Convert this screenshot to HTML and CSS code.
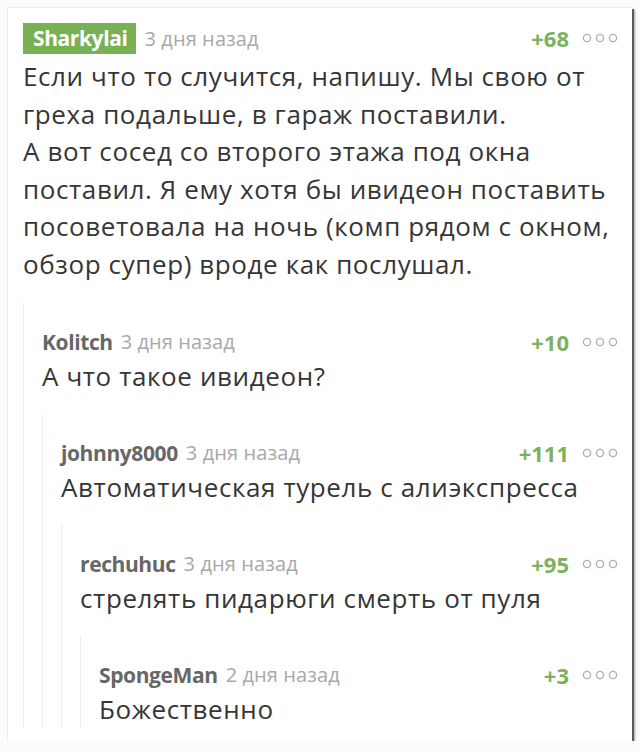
FILE: index.html
```html
<!DOCTYPE html>
<html lang="ru">
<head>
<meta charset="utf-8">
<link rel="stylesheet" href="styles.css">
</head>
<body>
<div class="card">
  <div class="comment first">
    <div class="head">
      <span class="user badge">Sharkylai</span>
      <span class="time">3 дня назад</span>
      <span class="score">+68</span>
      <svg class="dots" width="38" height="10" viewBox="0 0 38 10"><circle cx="5" cy="5" r="3.6"/><circle cx="18" cy="5" r="3.6"/><circle cx="31" cy="5" r="3.6"/></svg>
    </div>
    <div class="body">Если что то случится, напишу. Мы свою от греха подальше, в гараж поставили.<br>А вот сосед со второго этажа под окна поставил. Я ему хотя бы ивидеон поставить посоветовала на ночь (комп рядом с окном, обзор супер) вроде как послушал.</div>
    <div class="children">
      <div class="comment">
        <div class="head">
          <span class="user">Kolitch</span>
          <span class="time">3 дня назад</span>
          <span class="score">+10</span>
          <svg class="dots" width="38" height="10" viewBox="0 0 38 10"><circle cx="5" cy="5" r="3.6"/><circle cx="18" cy="5" r="3.6"/><circle cx="31" cy="5" r="3.6"/></svg>
        </div>
        <div class="body">А что такое ивидеон?</div>
        <div class="children">
          <div class="comment">
            <div class="head">
              <span class="user">johnny8000</span>
              <span class="time">3 дня назад</span>
              <span class="score">+111</span>
              <svg class="dots" width="38" height="10" viewBox="0 0 38 10"><circle cx="5" cy="5" r="3.6"/><circle cx="18" cy="5" r="3.6"/><circle cx="31" cy="5" r="3.6"/></svg>
            </div>
            <div class="body">Автоматическая турель с алиэкспресса</div>
            <div class="children">
              <div class="comment">
                <div class="head">
                  <span class="user">rechuhuc</span>
                  <span class="time">3 дня назад</span>
                  <span class="score">+95</span>
                  <svg class="dots" width="38" height="10" viewBox="0 0 38 10"><circle cx="5" cy="5" r="3.6"/><circle cx="18" cy="5" r="3.6"/><circle cx="31" cy="5" r="3.6"/></svg>
                </div>
                <div class="body">стрелять пидарюги смерть от пуля</div>
                <div class="children">
                  <div class="comment">
                    <div class="head">
                      <span class="user">SpongeMan</span>
                      <span class="time">2 дня назад</span>
                      <span class="score">+3</span>
                      <svg class="dots" width="38" height="10" viewBox="0 0 38 10"><circle cx="5" cy="5" r="3.6"/><circle cx="18" cy="5" r="3.6"/><circle cx="31" cy="5" r="3.6"/></svg>
                    </div>
                    <div class="body">Божественно</div>
                  </div>
                </div>
              </div>
            </div>
          </div>
        </div>
      </div>
    </div>
  </div>
</div>
</body>
</html>
```
FILE: styles.css
```css
html, body {
  margin: 0;
  padding: 0;
  background: #fbfbfb;
}
body {
  padding: 7px 8px 0 7px;
  font-family: "Open Sans", "Noto Sans", sans-serif;
  color: #333;
}
.card {
  width: 625px;
  height: 734px;
  box-sizing: border-box;
  background: #fff;
  border-top: 1px solid #ececec;
  border-left: 1px solid #ececec;
  box-shadow: 2px 2px 0 #5a5a5a, 3px 3px 2px rgba(0, 0, 0, 0.35);
  padding: 14px 12px 10px 15px;
  overflow: hidden;
}
.head {
  display: flex;
  align-items: center;
  height: 32px;
}
.user {
  font-weight: 700;
  font-size: 21px;
  color: #676767;
  letter-spacing: -0.4px;
}
.badge {
  background: #77b153;
  color: #fff;
  padding: 1px 9px 2px 10px;
  margin-right: 0;
}
.time {
  margin-left: 8px;
  font-size: 20px;
  color: #a8a8a8;
  letter-spacing: 0.1px;
}
.score {
  margin-left: auto;
  font-weight: 700;
  font-size: 22px;
  color: #7cb15f;
}
.dots {
  margin-left: 13px;
  margin-right: 0;
  fill: none;
  stroke: #b0b0b0;
  stroke-width: 1.4;
}
.body {
  font-size: 26px;
  line-height: 37px;
  color: #363636;
  letter-spacing: 0.6px;
}
.first > .body {
  padding-top: 4px;
  line-height: 37.6px;
}
.children {
  margin-top: 19px;
  border-left: 1px solid #ececec;
  padding-left: 18px;
  padding-top: 23px;
}
```
